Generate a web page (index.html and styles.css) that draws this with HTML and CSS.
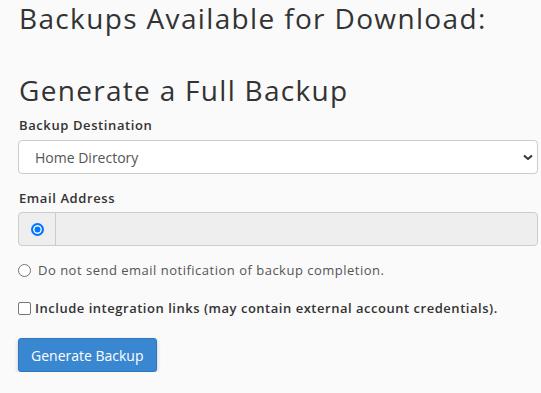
FILE: index.html
```html
<!DOCTYPE html>
<html lang="en">
<head>
  <meta charset="UTF-8" />
  <title>Backups</title>
  <link rel="stylesheet" href="styles.css">
</head>
<body>
  <main class="page">
    <h2 class="title">Backups Available for Download:</h2>

    <h2 class="title gen">Generate a Full Backup</h2>

    <label class="field-label" for="dest">Backup Destination</label>
    <div class="select-wrap">
      <select id="dest" class="select">
        <option>Home Directory</option>
      </select>
      <svg class="caret" width="10" height="7" viewBox="0 0 10 7"><path d="M1 1.5 L5 5 L9 1.5" fill="none" stroke="#333" stroke-width="2"/></svg>
    </div>

    <label class="field-label email" for="email">Email Address</label>
    <div class="input-group">
      <span class="addon"><span class="radio on"></span></span>
      <input id="email" class="text-input" type="text" disabled>
    </div>

    <div class="option">
      <span class="radio"></span>
      <span>Do not send email notification of backup completion.</span>
    </div>

    <div class="option check">
      <span class="box"></span>
      <span>Include integration links (may contain external account credentials).</span>
    </div>

    <button class="btn">Generate Backup</button>
  </main>
</body>
</html>
```

FILE: styles.css
```css
* {
  box-sizing: border-box;
  margin: 0;
  padding: 0;
}
body {
  background: #fafafa;
  color: #333;
  font-family: "Open Sans", sans-serif;
}
.page {
  padding: 0 3px 0 18px;
  display: flex;
  flex-direction: column;
  align-items: flex-start;
}
.title {
  font-weight: 400;
  font-size: 28px;
  line-height: 36px;
  letter-spacing: 1.35px;
  color: #333;
  margin-left: 1px;
}
.title.gen {
  margin-top: 36px;
  letter-spacing: 1.3px;
}
.field-label {
  font-size: 13px;
  font-weight: 600;
  line-height: 18px;
  letter-spacing: 0.6px;
  margin-top: 8px;
  margin-left: 1px;
}
.field-label.email {
  margin-top: 15px;
}
.select-wrap {
  position: relative;
  width: 100%;
  margin-top: 6px;
}
.select {
  display: block;
  width: 100%;
  height: 34px;
  appearance: none;
  background: #fff;
  border: 1px solid #ccc;
  border-radius: 4px;
  padding: 0 16px;
  font-family: "Open Sans", sans-serif;
  font-size: 14px;
  color: #555;
}
.caret {
  position: absolute;
  right: 5px;
  top: 14px;
}
.input-group {
  display: flex;
  width: 100%;
  height: 34px;
  margin-top: 5px;
  border: 1px solid #ccc;
  border-radius: 4px;
  background: #eee;
}
.addon {
  width: 37px;
  border-right: 1px solid #ccc;
  display: flex;
  align-items: center;
  justify-content: center;
}
.text-input {
  flex: 1;
  border: 0;
  background: transparent;
}
.radio {
  width: 13px;
  height: 13px;
  border: 1px solid #767676;
  border-radius: 50%;
  background: #fff;
  display: inline-block;
  flex-shrink: 0;
}
.radio.on {
  border: 2px solid #0075ff;
  box-shadow: inset 0 0 0 1.5px #fff;
  background: #0075ff;
}
.option {
  display: flex;
  align-items: center;
  gap: 7px;
  margin-top: 15px;
  font-size: 13px;
  line-height: 18px;
  letter-spacing: 0.5px;
  color: #555;
}
.option.check {
  font-weight: 600;
  color: #333;
  gap: 4px;
  margin-top: 20px;
  letter-spacing: 0.52px;
}
.box {
  width: 13px;
  height: 13px;
  border: 1px solid #767676;
  border-radius: 2px;
  background: #fff;
  flex-shrink: 0;
}
.btn {
  margin-top: 21px;
  height: 34px;
  padding: 0 12px;
  background: #3a87d1;
  color: #fff;
  border: 1px solid #2f78c0;
  border-radius: 3px;
  font-family: "Open Sans", sans-serif;
  font-size: 14px;
  box-shadow: 0 2px 4px rgba(0, 0, 0, 0.2);
}
```
